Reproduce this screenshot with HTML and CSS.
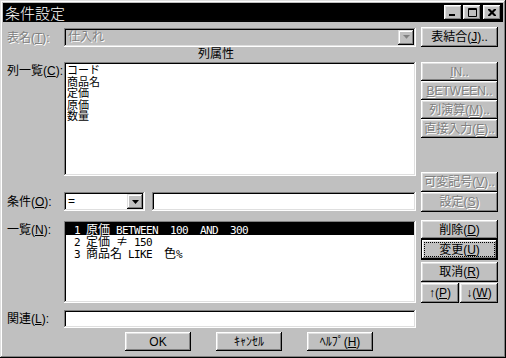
FILE: index.html
```html
<!DOCTYPE html>
<html lang="ja">
<head>
    <meta charset="UTF-8">
    <title>条件設定</title>
    <link rel="stylesheet" href="styles.css">
</head>
<body>
    <div class="window">
        <div class="titlebar">
            <span class="title">条件設定</span>
            <div class="caption-btns">
                <span class="cap-btn"><svg width="8" height="7" viewBox="0 0 8 7"><rect x="0" y="5" width="6" height="2" fill="#000"/></svg></span>
                <span class="cap-btn max"><svg width="9" height="9" viewBox="0 0 9 9"><path d="M0.5 0.5h8v8h-8z M0 1.5h9" fill="none" stroke="#000" stroke-width="1"/></svg></span>
                <span class="cap-btn close"><svg width="8" height="7" viewBox="0 0 8 7"><path d="M0 0h2l2 2 2-2h2v1l-2.5 2.5 2.5 2.5v1h-2l-2-2-2 2h-2v-1l2.5-2.5-2.5-2.5z" fill="#000"/></svg></span>
            </div>
        </div>

        <div class="main">
            <div class="left">
                <div class="row row-center">
                    <label class="label disabled">表名(<u>T</u>):</label>
                    <div class="combo disabled-box">
                        <span class="combo-text disabled">仕入れ</span>
                        <span class="drop"><svg width="7" height="5" viewBox="0 0 7 5"><path d="M1 1h5l-2.5 3z" fill="#fff"/><path d="M0 0h7l-3.5 4z" fill="#808080"/></svg></span>
                    </div>
                </div>

                <div class="row col-head">
                    <span></span>
                    <span class="col-head-text">列属性</span>
                </div>

                <div class="row">
                    <label class="label label-top">列一覧(<u>C</u>):</label>
                    <div class="listbox cols">
                        <div class="item">コード</div>
                        <div class="item">商品名</div>
                        <div class="item">定価</div>
                        <div class="item">原価</div>
                        <div class="item">数量</div>
                    </div>
                </div>

                <div class="row row-center row-cond">
                    <label class="label">条件(<u>O</u>):</label>
                    <div class="cond-fields">
                        <div class="combo small">
                            <span class="combo-text">=</span>
                            <span class="drop"><svg width="7" height="4" viewBox="0 0 7 4"><path d="M0 0h7l-3.5 4z" fill="#000"/></svg></span>
                        </div>
                        <div class="field"></div>
                    </div>
                </div>

                <div class="row row-list">
                    <label class="label label-top">一覧(<u>N</u>):</label>
                    <div class="listbox conds">
                        <div class="cond selected"> 1 <span class="jp">原価</span> BETWEEN  100  AND  300</div>
                        <div class="cond"> 2 <span class="jp">定価</span> <span class="jp">≠</span> 150</div>
                        <div class="cond"> 3 <span class="jp">商品名</span> LIKE  <span class="jp">色</span>%</div>
                    </div>
                </div>

                <div class="row row-center row-rel">
                    <label class="label">関連(<u>L</u>):</label>
                    <div class="field rel"></div>
                </div>
            </div>

            <div class="right">
                <button type="button" class="btn join">表結合(<u>J</u>)..</button>
                <button type="button" class="btn op first disabled"><span><u>I</u>N..</span></button>
                <button type="button" class="btn op disabled"><span><u>B</u>ETWEEN..</span></button>
                <button type="button" class="btn op disabled"><span>列演算(<u>M</u>)..</span></button>
                <button type="button" class="btn op disabled"><span>直接入力(<u>E</u>)..</span></button>
                <button type="button" class="btn var disabled"><span>可変記号(<u>V</u>)..</span></button>
                <button type="button" class="btn set disabled"><span>設定(<u>S</u>)</span></button>
                <button type="button" class="btn del">削除(<u>D</u>)</button>
                <button type="button" class="btn default"><span class="focus">変更(<u>U</u>)</span></button>
                <button type="button" class="btn cancel">取消(<u>R</u>)</button>
                <div class="move-btns">
                    <button type="button" class="btn">↑(<u>P</u>)</button>
                    <button type="button" class="btn">↓(<u>W</u>)</button>
                </div>
            </div>
        </div>

        <div class="footer">
            <button type="button" class="btn foot">OK</button>
            <button type="button" class="btn foot">ｷｬﾝｾﾙ</button>
            <button type="button" class="btn foot">ﾍﾙﾌﾟ(<u>H</u>)</button>
        </div>
    </div>
</body>
</html>
```

FILE: styles.css
```css
* {
    box-sizing: border-box;
}
html, body {
    margin: 0;
    padding: 0;
}
body {
    width: 506px;
    height: 358px;
    overflow: hidden;
    background-color: #c0c0c0;
    font-family: "Liberation Sans", "Noto Sans CJK JP", sans-serif;
    font-size: 12px;
    color: #000;
}
u {
    text-decoration: underline;
    text-underline-offset: 1px;
}
.window {
    width: 506px;
    height: 358px;
    padding: 3px;
    background-color: #c0c0c0;
    box-shadow: inset -1px -1px #000, inset 1px 1px #dfdfdf, inset -2px -2px #808080, inset 2px 2px #fff;
}
.titlebar {
    display: flex;
    align-items: center;
    height: 19px;
    padding: 0 2px;
    background-color: #000;
}
.title {
    color: #fff;
    font-family: "Noto Sans CJK JP", sans-serif;
    font-size: 15px;
    font-weight: 300;
    line-height: 19px;
}
.caption-btns {
    display: flex;
    margin-left: auto;
}
.cap-btn {
    display: flex;
    align-items: center;
    justify-content: center;
    width: 18px;
    height: 15px;
    background-color: #c0c0c0;
    box-shadow: inset -1px -1px #000, inset 1px 1px #fff, inset -2px -2px #808080, inset 2px 2px #dfdfdf;
}
.cap-btn.max {
    margin-left: 1px;
}
.cap-btn.close {
    margin-left: 2px;
}
.main {
    display: flex;
    gap: 5px;
    padding: 0 1px 0 4px;
}
.left {
    width: 409px;
    padding-top: 6px;
}
.right {
    display: flex;
    flex-direction: column;
    width: 77px;
}
.row {
    display: grid;
    grid-template-columns: 57px 352px;
}
.row-center {
    align-items: center;
}
.label {
    white-space: nowrap;
    line-height: 14px;
}
.label-top {
    padding-top: 2px;
}
.disabled,
.btn.disabled {
    color: #808080;
    text-shadow: 1px 1px 0 #fff;
}
.combo {
    display: flex;
    align-items: center;
    height: 19px;
    padding: 2px;
    background-color: #fff;
    box-shadow: inset -1px -1px #fff, inset 1px 1px #808080, inset -2px -2px #dfdfdf, inset 2px 2px #000;
}
.combo.disabled-box {
    background-color: #c0c0c0;
}
.combo-text {
    flex: 1;
    padding-left: 2px;
    line-height: 15px;
}
.drop {
    display: flex;
    align-items: center;
    justify-content: center;
    width: 16px;
    height: 15px;
    background-color: #c0c0c0;
    box-shadow: inset -1px -1px #000, inset 1px 1px #dfdfdf, inset -2px -2px #808080, inset 2px 2px #fff;
}
.col-head {
    height: 15px;
    line-height: 15px;
}
.col-head-text {
    padding-left: 134px;
}
.listbox {
    padding: 2px;
    background-color: #fff;
    box-shadow: inset -1px -1px #fff, inset 1px 1px #808080, inset -2px -2px #dfdfdf, inset 2px 2px #000;
    overflow: hidden;
}
.listbox.cols {
    height: 114px;
}
.item {
    padding-left: 1px;
    font-family: "Noto Sans CJK JP", sans-serif;
    font-size: 11px;
    line-height: 11.5px;
}
.row-cond {
    margin-top: 16px;
}
.cond-fields {
    display: flex;
    gap: 7px;
}
.combo.small {
    width: 81px;
}
.field {
    flex: 1;
    height: 19px;
    background-color: #fff;
    box-shadow: inset -1px -1px #fff, inset 1px 1px #808080, inset -2px -2px #dfdfdf, inset 2px 2px #000;
}
.row-list {
    margin-top: 10px;
}
.listbox.conds {
    height: 82px;
}
.cond {
    height: 12px;
    line-height: 12px;
    padding-left: 2px;
    white-space: pre;
    font-family: "DejaVu Sans Mono", "Noto Sans CJK JP", monospace;
    font-size: 11px;
    letter-spacing: -0.62px;
}
.cond .jp {
    font-family: "Noto Sans CJK JP", sans-serif;
    font-size: 12px;
    letter-spacing: 0;
}
.cond.selected {
    background-color: #000;
    color: #fff;
}
.row-rel {
    margin-top: 7px;
}
.field.rel {
    height: 18px;
}
.btn {
    display: flex;
    align-items: center;
    justify-content: center;
    height: 19px;
    padding: 0;
    border: none;
    background-color: #c0c0c0;
    box-shadow: inset -1px -1px #000, inset 1px 1px #fff, inset -2px -2px #808080, inset 2px 2px #dfdfdf;
    font-family: "Liberation Sans", "Noto Sans CJK JP", sans-serif;
    font-size: 12px;
    line-height: 14px;
    color: #000;
    white-space: nowrap;
}
.btn.join {
    margin-top: 5px;
    height: 20px;
}
.btn.op.first {
    margin-top: 15px;
}
.btn.var {
    margin-top: 34px;
    height: 20px;
}
.btn.set {
    height: 20px;
}
.btn.del {
    margin-top: 8px;
}
.btn.default {
    height: 21px;
    padding: 3px;
    box-shadow: inset 0 0 0 1px #000, inset -2px -2px #000, inset 2px 2px #fff, inset -3px -3px #808080, inset 3px 3px #dfdfdf;
}
.focus {
    display: flex;
    align-items: center;
    justify-content: center;
    width: 100%;
    height: 100%;
    border: 1px dotted #000;
}
.btn.cancel {
    margin-top: 2px;
    height: 20px;
}
.move-btns {
    display: flex;
    gap: 1px;
    margin-top: 1px;
}
.move-btns .btn {
    flex: 1;
    height: 20px;
}
.footer {
    display: flex;
    gap: 25px;
    margin-top: 4px;
    padding-left: 122px;
}
.btn.foot {
    width: 66px;
}
```
